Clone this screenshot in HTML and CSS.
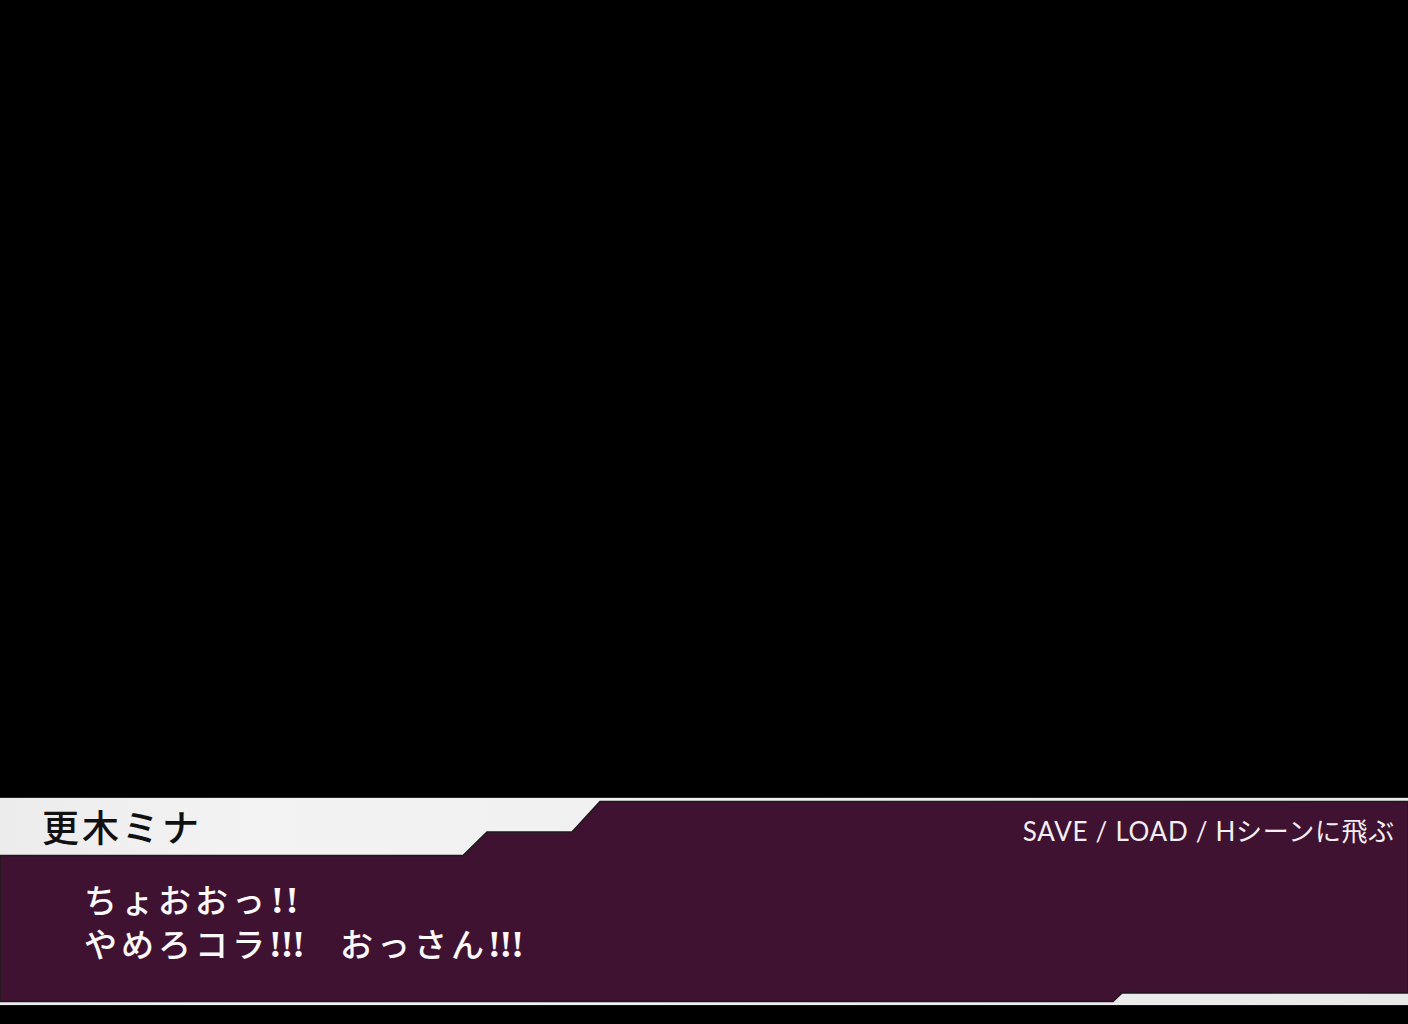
FILE: index.html
```html
<!DOCTYPE html>
<html lang="ja">
<head>
<meta charset="utf-8">
<title>更木ミナ</title>
<link rel="stylesheet" href="styles.css">
</head>
<body>
<div class="screen">
  <div class="stage"></div>
  <div class="panel">
    <div class="panel-head">
      <div class="name">更木ミナ</div>
      <div class="menu">SAVE / LOAD / Hシーンに飛ぶ</div>
    </div>
    <div class="message">
      <div class="line">ちょおおっ<span class="bang bang-wide">!!</span></div>
      <div class="line">やめろコラ<span class="bang">!!!</span><span class="gap"></span>おっさん<span class="bang">!!!</span></div>
    </div>
  </div>
</div>
</body>
</html>
```

FILE: styles.css
```css
html, body {
  margin: 0;
  padding: 0;
  background: #000;
}

.screen {
  width: 1408px;
  height: 1024px;
  display: flex;
  flex-direction: column;
  background: #000;
  overflow: hidden;
}

.stage {
  flex: 1;
}

.panel {
  height: 209px;
  margin-bottom: 18px;
  background-color: #000;
  background-repeat: no-repeat;
  background-size: 1408px 209px;
  background-image: url("data:image/svg+xml;utf8,<svg xmlns='http://www.w3.org/2000/svg' width='1408' height='209' viewBox='0 0 1408 209'><defs><linearGradient id='g' x1='0' y1='0' x2='1' y2='0'><stop offset='0' stop-color='%23ececec'/><stop offset='0.18' stop-color='%23f3f3f3'/><stop offset='0.5' stop-color='%23f0f0f0'/><stop offset='1' stop-color='%23e9e9e9'/></linearGradient></defs><rect x='0' y='0' width='1408' height='1' fill='%23262626'/><rect x='0' y='1' width='1408' height='207' fill='url(%23g)'/><rect x='0' y='208' width='1408' height='1' fill='%23151515'/><polygon points='0,58.5 463,58.5 487,35 572,35 600,4.5 1408,4.5 1408,196 1122,196 1113,204.5 0,204.5' fill='%233f1231' stroke='%231e1a1c' stroke-width='1.6'/></svg>");
  display: flex;
  flex-direction: column;
}

.panel-head {
  height: 58px;
  display: flex;
  align-items: center;
  justify-content: space-between;
  padding: 0 13px 0 42px;
}

.name {
  font-family: "Noto Sans CJK JP", sans-serif;
  font-size: 37px;
  font-weight: 500;
  letter-spacing: 3px;
  line-height: 40px;
  color: #111;
}

.menu {
  font-family: Lato, "Noto Sans CJK JP", sans-serif;
  font-size: 26px;
  letter-spacing: 0.7px;
  line-height: 30px;
  color: #f4eef2;
  padding-top: 9px;
}

.message {
  margin-top: 22px;
  padding-left: 84px;
  font-family: "Noto Sans CJK JP", sans-serif;
  font-weight: 500;
  font-size: 33px;
  line-height: 44px;
  color: #fbf8fa;
}

.line {
  white-space: nowrap;
  letter-spacing: 4px;
  height: 44px;
}

.bang {
  font-family: "Liberation Serif", serif;
  font-weight: 700;
  font-size: 38px;
  letter-spacing: -1px;
}

.bang-wide {
  margin-left: 2px;
  letter-spacing: 2px;
}

.gap {
  display: inline-block;
  width: 36px;
}
```
